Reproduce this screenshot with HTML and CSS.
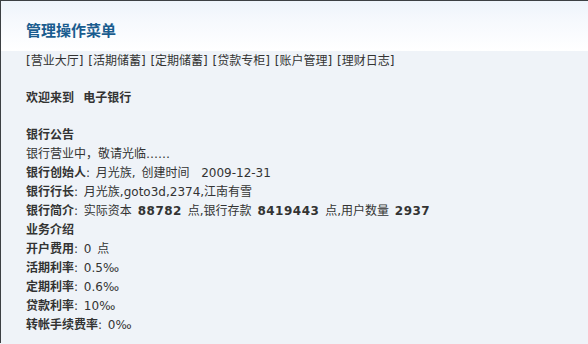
FILE: index.html
```html
<!DOCTYPE html>
<html lang="zh-CN">
<head>
<meta charset="utf-8">
<title>管理操作菜单</title>
<link rel="stylesheet" href="styles.css">
</head>
<body>
<div class="frame">
  <div class="header">
    <h1 class="title">管理操作菜单</h1>
  </div>
  <div class="content">
    <div class="menu">[<a>营业大厅</a>] [<a>活期储蓄</a>] [<a>定期储蓄</a>] [<a>贷款专柜</a>] [<a>账户管理</a>] [<a>理财日志</a>]</div>
    <div class="blank"></div>
    <div class="line welcome"><b>欢迎来到&nbsp; 电子银行</b></div>
    <div class="blank"></div>
    <div class="line"><b>银行公告</b></div>
    <div class="line">银行营业中，敬请光临……</div>
    <div class="line"><b>银行创始人</b>: 月光族, 创建时间&nbsp; 2009-12-31</div>
    <div class="line"><b>银行行长</b>: 月光族,goto3d,2374,江南有雪</div>
    <div class="line"><b>银行简介</b>: 实际资本 <b class="num">88782</b> 点,银行存款 <b class="num">8419443</b> 点,用户数量 <b class="num">2937</b></div>
    <div class="line"><b>业务介绍</b></div>
    <div class="line"><b>开户费用</b>: 0 点</div>
    <div class="line"><b>活期利率</b>: 0.5‰</div>
    <div class="line"><b>定期利率</b>: 0.6‰</div>
    <div class="line"><b>贷款利率</b>: 10‰</div>
    <div class="line"><b>转帐手续费率</b>: 0‰</div>
  </div>
</div>
</body>
</html>
```

FILE: styles.css
```css
html, body {
  margin: 0;
  padding: 0;
  background: #eff3f8;
}
body {
  font-family: "DejaVu Sans", "Noto Sans CJK SC", sans-serif;
  font-size: 12px;
  color: #333;
}
.frame {
  border-top: 1px solid #3c4043;
  border-left: 1px solid #3c4043;
  min-height: 343px;
  box-sizing: border-box;
}
.header {
  height: 50px;
  background: linear-gradient(to bottom, #eef4fb 0%, #f6f9fd 40%, #ffffff 100%);
  display: flex;
  align-items: center;
  padding-left: 25px;
  padding-top: 7px;
  box-sizing: border-box;
}
.title {
  margin: 0;
  font-size: 15px;
  font-weight: bold;
  color: #1a5d8f;
  font-family: "Noto Sans CJK SC", sans-serif;
  line-height: 19px;
}
.content {
  padding: 1px 0 0 25px;
  line-height: 19px;
}
.menu {
  word-spacing: 1px;
}
.menu a {
  color: #333;
}
.blank {
  height: 18px;
}
.line {
  word-spacing: 2px;
}
.line.welcome {
  word-spacing: 0.5px;
}
.line b {
  font-weight: bold;
}
.line .num {
  letter-spacing: 0.5px;
}
```
